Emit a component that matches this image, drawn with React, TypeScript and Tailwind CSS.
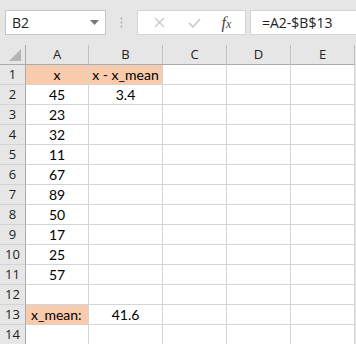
import React from "react";

const rows: { a?: string; b?: string; aOrange?: boolean; bOrange?: boolean; aLeft?: boolean }[] = [
  { a: "x", b: "x - x_mean", aOrange: true, bOrange: true },
  { a: "45", b: "3.4" },
  { a: "23" },
  { a: "32" },
  { a: "11" },
  { a: "67" },
  { a: "89" },
  { a: "50" },
  { a: "17" },
  { a: "25" },
  { a: "57" },
  {},
  { a: "x_mean:", b: "41.6", aOrange: true, aLeft: true },
  {},
];

const cellFont = { fontFamily: "Lato, 'Open Sans', sans-serif" };

export default function App() {
  return (
    <div
      className="w-[356px] h-[344px] overflow-hidden bg-[#e6e6e6] relative"
      style={{ fontFamily: "'Open Sans', 'Noto Sans', sans-serif" }}
    >
      {/* formula bar */}
      <div className="h-[45px] flex items-start pt-[10px] pl-[5px]">
        <div className="w-[101px] h-[25px] bg-white border border-[#c6c6c6] flex items-center justify-between pl-[6px] pr-[6px]">
          <span className="text-[14px] text-[#222]">B2</span>
          <svg width="9" height="5" viewBox="0 0 9 5">
            <path d="M0 0 L9 0 L4.5 5 Z" fill="#777" />
          </svg>
        </div>
        <div className="w-[31px] h-[25px] flex items-center justify-center">
          <svg width="3" height="11" viewBox="0 0 3 11">
            <circle cx="1.5" cy="1.5" r="1" fill="#aaa" />
            <circle cx="1.5" cy="5.5" r="1" fill="#aaa" />
            <circle cx="1.5" cy="9.5" r="1" fill="#aaa" />
          </svg>
        </div>
        <div className="w-[109px] h-[25px] bg-white border border-[#d4d4d4] flex items-center">
          <div className="w-[38px] flex justify-center pl-[4px]">
            <svg width="11" height="11" viewBox="0 0 11 11">
              <path d="M1 1 L10 10 M10 1 L1 10" stroke="#c8c8c8" strokeWidth="1.4" />
            </svg>
          </div>
          <div className="w-[36px] flex justify-center">
            <svg width="13" height="10" viewBox="0 0 13 10">
              <path d="M1 5 L5 9 L12 1" stroke="#c8c8c8" strokeWidth="1.6" fill="none" />
            </svg>
          </div>
          <div className="flex-1 flex justify-center pr-[4px]">
            <span
              className="text-[16px] italic text-[#444] leading-none"
              style={{ fontFamily: "'Liberation Serif', serif" }}
            >
              f<span className="text-[12px]">x</span>
            </span>
          </div>
        </div>
        <div className="w-[4px]" />
        <div className="flex-1 h-[25px] bg-white border border-[#d4d4d4] border-r-0 flex items-center pl-[11px]">
          <span className="text-[14px] text-[#222]">=A2-$B$13</span>
        </div>
      </div>

      {/* grid */}
      <div className="grid grid-cols-[26px_63px_74px_64px_64px_64px] auto-rows-[20px]">
        {/* header row */}
        <div className="relative bg-[#e6e6e6] border-r border-b border-[#ababab]">
          <svg className="absolute right-[4px] bottom-[3px]" width="12" height="12" viewBox="0 0 12 12">
            <path d="M12 0 L12 12 L0 12 Z" fill="#b5b5b5" />
          </svg>
        </div>
        {["A", "B", "C", "D", "E"].map((c) => (
          <div
            key={c}
            className="bg-[#e6e6e6] border-r border-b border-r-[#c0c0c0] border-b-[#ababab] flex items-center justify-center text-[13px] text-[#222]"
          >
            {c}
          </div>
        ))}
        {rows.map((r, i) => (
          <React.Fragment key={i}>
            <div className="bg-[#e6e6e6] border-r border-b border-r-[#ababab] border-b-[#d4d4d4] flex items-center justify-center text-[13px] text-[#222]">
              {i + 1}
            </div>
            <div
              className={`border-r border-b border-[#d4d4d4] flex items-center text-[14px] text-black ${
                r.aOrange ? "bg-[#f8cbad]" : "bg-white"
              } ${r.aLeft ? "justify-start pl-[5px]" : "justify-center"}`}
              style={cellFont}
            >
              {r.a}
            </div>
            <div
              className={`border-r border-b border-[#d4d4d4] flex items-center justify-center text-[14px] text-black ${
                r.bOrange ? "bg-[#f8cbad]" : "bg-white"
              }`}
              style={cellFont}
            >
              {r.b}
            </div>
            <div className="bg-white border-r border-b border-[#d4d4d4]" />
            <div className="bg-white border-r border-b border-[#d4d4d4]" />
            <div className="bg-white border-r border-b border-[#d4d4d4]" />
          </React.Fragment>
        ))}
      </div>
    </div>
  );
}
